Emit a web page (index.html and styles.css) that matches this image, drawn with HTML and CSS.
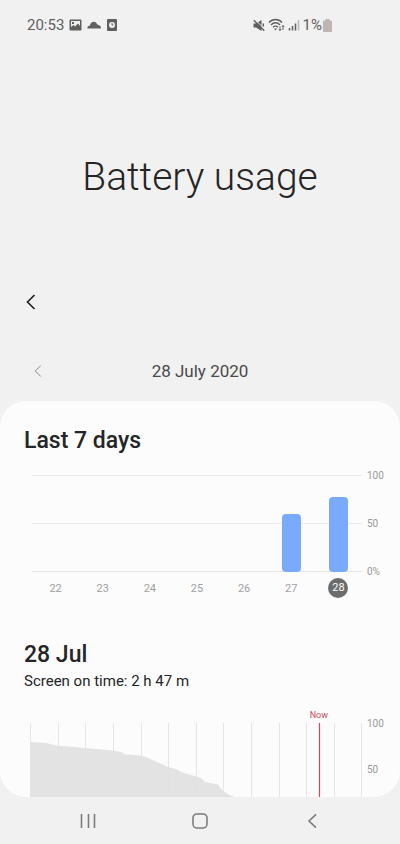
FILE: index.html
```html
<!DOCTYPE html>
<html lang="en">
<head>
<meta charset="utf-8">
<meta name="viewport" content="width=device-width, initial-scale=1">
<title>Battery usage</title>
<link rel="stylesheet" href="styles.css">
</head>
<body>
<div class="status">
  <div class="status-group">
    <span class="clock">20:53</span>
    <svg width="13" height="12" viewBox="0 0 13 12" aria-hidden="true"><path fill="currentColor" fill-rule="evenodd" d="M1.500 .5h10a1 1 0 0 1 1 1v9a1 1 0 0 1-1 1h-10a1 1 0 0 1-1-1v-9a1 1 0 0 1 1-1zM2 2v6l2.500-2 1.500 1.500L9 4.500 11 7V2zM3 3h2v2H3z"/></svg>
    <svg width="14" height="12" viewBox="0 0 14 12" aria-hidden="true"><path fill="currentColor" d="M1 9.500C0 9.500 0 7 3 6.500C3.500 4 4.800 2.800 6.800 2.800S9.500 4 10.300 5.500c2.200.3 3.700 1.500 3.700 4z"/></svg>
    <svg width="12" height="12" viewBox="0 0 12 12" aria-hidden="true"><rect x="1" width="10" height="12" rx="1" fill="currentColor"/><circle cx="6" cy="6" r="3" fill="#f1f1f1"/><path d="M6 4v2h1.500" fill="none" stroke="currentColor"/></svg>
  </div>
  <div class="status-group right">
    <svg width="12" height="13" viewBox="0 0 12 13" aria-hidden="true"><path fill="currentColor" d="M.5 4.500H3L8.500 1v11L3 8.500H.5z"/><path d="M1.800.3l10 10" stroke="#f1f1f1" stroke-width="1"/><path d="M.8 1.300l10.500 10.500M10.300 4.500v3" stroke="currentColor" stroke-width="1.400"/></svg>
    <svg width="17" height="14" viewBox="0 0 17 14" fill="none" stroke="currentColor" stroke-width="1.300" aria-hidden="true"><path d="M1 4.500C4.500.5 10.500.5 14 4.500M3 7c2.500-3 6.500-3 9 0M5 9.300c1.500-1.700 3.500-1.700 5 0"/><path d="M6 10.500h3l-1.500 2z" fill="currentColor" stroke="none"/><path d="M12 8.500v4M10.800 11.200L12 12.500l1.200-1.300M15 7.500V12M13.800 8.800L15 7.500l1.200 1.300" stroke-width="1"/></svg>
    <svg width="12" height="12" viewBox="0 0 12 12" aria-hidden="true"><path d="M1.500 9v2.500M4.500 7v4.500M7.500 4.500v7" stroke="currentColor" stroke-width="1.500"/><path d="M10.500 1v10.500" stroke="#bbb" stroke-width="1.500"/></svg>
    <span>1%</span>
    <svg class="battery" width="9" height="13" viewBox="0 0 9 13" aria-hidden="true"><path fill="#bfb5b2" d="M2.500 0h4v1.500H8a1 1 0 0 1 1 1V12a1 1 0 0 1-1 1H1a1 1 0 0 1-1-1V2.500a1 1 0 0 1 1-1h1.500z"/></svg>
  </div>
</div>
<header class="hero"><h1>Battery usage</h1></header>
<div class="toolbar">
  <button class="icon-button" aria-label="Navigate up"><svg width="10" height="16" viewBox="0 0 10 16"><path d="M8.500 1L1.500 8l7 7" fill="none" stroke="#252525" stroke-width="1.700"/></svg></button>
</div>
<div class="date-row">
  <button class="icon-button" aria-label="Previous day"><svg width="8" height="12" viewBox="0 0 8 12"><path d="M6.800.5L1.300 6l5.500 5.500" fill="none" stroke="#888" stroke-width="1"/></svg></button>
  <span class="date">28 July 2020</span>
</div>
<main class="card">
  <h2>Last 7 days</h2>
  <section class="chart week" aria-label="Last 7 days">
    <div class="plot bars">
      <div class="slot"></div><div class="slot"></div><div class="slot"></div><div class="slot"></div><div class="slot"></div>
      <div class="slot"><div class="bar" style="height:60%"></div></div>
      <div class="slot"><div class="bar" style="height:77%"></div></div>
    </div>
    <div class="scale"><span>100</span><span>50</span><span>0%</span></div>
  </section>
  <div class="days">
    <span>22</span><span>23</span><span>24</span><span>25</span><span>26</span><span>27</span><span><b class="today">28</b></span>
  </div>
  <h2 class="day-title">28 Jul</h2>
  <p>Screen on time: 2 h 47 m</p>
  <section class="chart day" aria-label="Battery level on 28 Jul">
    <div class="plot level">
      <svg viewBox="0 0 332 96" preserveAspectRatio="none" aria-hidden="true">
        <path stroke="#e6e6e6" d="M.5 0v96M28.500 0v96M55.500 0v96M83.500 0v96M111.500 0v96M138.500 0v96M166.500 0v96M193.500 0v96M221.500 0v96M249.500 0v96M276.500 0v96M304.500 0v96M331.500 0v96"/>
        <path fill="#e1e1e1" fill-opacity=".92" d="M.5 19L16 20 26 22.500 55 25 83 27.500 91 29 95 31.500 110 32.500 116 34 138 44 146 46 151 49 166 53.500 171 55 175 59 188 61.500 193 68 200 72.500 208 75V96H.5z"/>
        <path stroke="#c94a5c" stroke-width="1.200" d="M289.500 0v96"/>
      </svg>
      <span class="now">Now</span>
    </div>
    <div class="scale"><span>100</span><span>50</span></div>
  </section>
</main>
<nav class="nav">
  <button aria-label="Recent apps"><svg width="16" height="16" viewBox="0 0 16 16"><path d="M1.500 1v14M8.500 1v14M14.500 1v14" stroke="#7c7c7c" stroke-width="1.600"/></svg></button>
  <button aria-label="Home"><svg width="16" height="16" viewBox="0 0 16 16"><rect x="1" y="1" width="14" height="14" rx="4" fill="none" stroke="#7c7c7c" stroke-width="1.600"/></svg></button>
  <button aria-label="Back"><svg width="16" height="16" viewBox="0 0 16 16"><path d="M12 1.300L5 8l7 6.700" fill="none" stroke="#7c7c7c" stroke-width="1.600"/></svg></button>
</nav>
</body>
</html>
```
FILE: styles.css
```css
* { box-sizing: border-box; }
body {
  margin: 0;
  height: 100vh;
  display: flex;
  flex-direction: column;
  background: #f1f1f1;
  color: #252525;
  font-family: Roboto, sans-serif;
}
svg { display: block; flex: none; }
h1, h2, p { margin: 0; }
button {
  display: flex;
  align-items: center;
  justify-content: center;
  padding: 0;
  border: 0;
  background: none;
}
.status {
  flex: none;
  display: flex;
  justify-content: space-between;
  height: 50px;
  padding: 0 68px 0 27px;
  color: #606060;
  font-size: 15px;
}
.status-group { display: flex; align-items: center; gap: 5px; }
.status-group.right { gap: 3px; }
.battery { margin-left: -2px; }
.hero {
  flex: none;
  display: flex;
  align-items: center;
  justify-content: center;
  height: 232px;
  padding-top: 22px;
}
h1 { font-size: 39px; line-height: 48px; font-weight: 300; }
.toolbar {
  flex: none;
  display: flex;
  align-items: center;
  height: 40px;
  padding-left: 19px;
  margin-bottom: 28px;
}
.icon-button { width: 24px; height: 32px; }
.date-row {
  flex: none;
  display: grid;
  grid-template-columns: 24px 1fr 24px;
  align-items: center;
  height: 42px;
  padding: 0 26px;
  margin-bottom: 9px;
}
.date { text-align: center; font-size: 17px; color: #4a4a4a; }
.card {
  flex: 1;
  min-height: 0;
  overflow: hidden;
  padding: 25px 0 0 24px;
  border-radius: 26px;
  background: #fcfcfc;
}
h2 { font-size: 23px; line-height: 30px; font-weight: 500; }
.chart { display: flex; }
.plot { position: relative; flex: 1; }
.week { height: 97px; margin: 19px 0 0 8px; }
.bars {
  display: grid;
  grid-template-columns: repeat(7, 1fr);
  background: linear-gradient(#ececec, #ececec) 0 0 / 100% 1px no-repeat,
    linear-gradient(#ececec, #ececec) 0 50% / 100% 1px no-repeat,
    linear-gradient(#e6e6e6, #e6e6e6) 0 100% / 100% 1px no-repeat;
}
.slot { display: flex; align-items: flex-end; justify-content: center; }
.bar { width: 19px; border-radius: 4px; background: #79aafc; }
.scale {
  display: flex;
  flex-direction: column;
  justify-content: space-between;
  width: 38px;
  padding-left: 5px;
  margin: -5px 0 -6px;
  font-size: 10px;
  line-height: 12px;
  color: #9a9a9a;
}
.days {
  display: grid;
  grid-template-columns: repeat(7, 1fr);
  align-items: center;
  height: 20px;
  margin: 6px 38px 0 8px;
  font-size: 11px;
  text-align: center;
  color: #a0a0a0;
}
.today {
  display: block;
  width: 20px;
  margin: 0 auto;
  border-radius: 50%;
  background: #6c6c6c;
  color: #fff;
  font-weight: 400;
  line-height: 20px;
}
.day-title { margin-top: 42px; }
p { font-size: 15px; line-height: 22px; }
.day { height: 96px; margin: 31px 0 0 6px; }
.day .scale { height: 58px; }
.level svg { width: 100%; height: 100%; }
.now {
  position: absolute;
  left: 87%;
  bottom: 100%;
  transform: translateX(-50%);
  font-size: 9px;
  line-height: 16px;
  color: #c94a5c;
}
.nav {
  flex: none;
  display: grid;
  grid-template-columns: repeat(3, 112px);
  justify-content: center;
  height: 47px;
}
```
